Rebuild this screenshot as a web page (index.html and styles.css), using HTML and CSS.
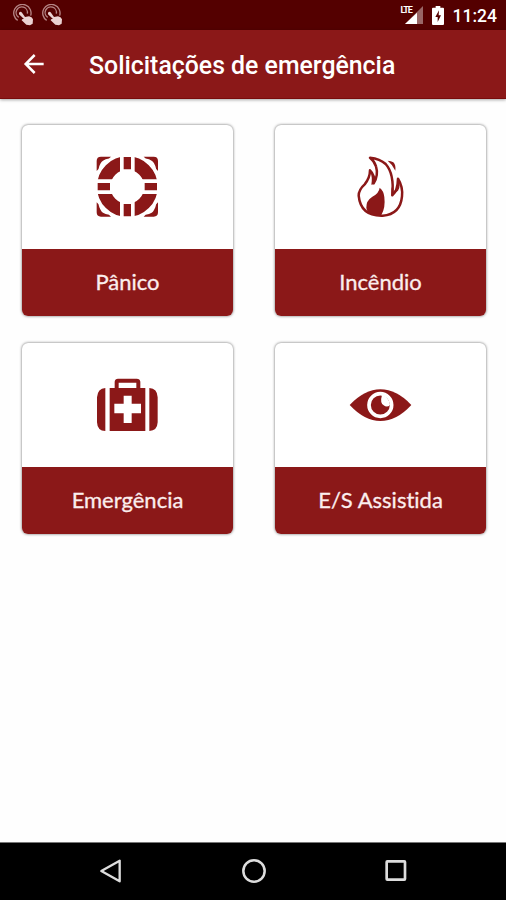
FILE: index.html
```
<!DOCTYPE html>
<html lang="pt-BR">
<head>
<meta charset="utf-8">
<title>Solicitações de emergência</title>
<link rel="stylesheet" href="styles.css">
</head>
<body>
<div class="screen">
  <div class="status">
    <div class="notices">
      <svg class="touch" viewBox="0 0 66 66"><g fill="none" stroke="#b58585" stroke-width="4"><path d="M17 49A26 26 0 1 1 56 35"/><path d="M20 40A17 17 0 1 1 46 29"/></g><path d="M21 26q5-5 9 0l9 13 12-2q9 1 12 9l-1 13-8 5-11-2-14-13q0-5 7-4L21 31z" fill="#ead2d2"/></svg>
      <svg class="touch" viewBox="0 0 66 66"><g fill="none" stroke="#b58585" stroke-width="4"><path d="M17 49A26 26 0 1 1 56 35"/><path d="M20 40A17 17 0 1 1 46 29"/></g><path d="M21 26q5-5 9 0l9 13 12-2q9 1 12 9l-1 13-8 5-11-2-14-13q0-5 7-4L21 31z" fill="#ead2d2"/></svg>
    </div>
    <div class="system">
      <div class="signal"><span class="lte">LTE</span><svg class="bars" viewBox="0 0 54 54"><path d="M54 0V54H0z" fill="#966"/><path d="M36 20V54H0z" fill="#fff"/></svg></div>
      <svg class="battery" viewBox="0 0 36 57"><path d="M11 0h14v5h8q3 0 3 3v46q0 3-3 3H3q-3 0-3-3V8q0-3 3-3h8z" fill="#fff"/><path d="M21 13L10 33h7v15l10-20h-7z" fill="#500"/></svg>
      <span class="clock">11:24</span>
    </div>
  </div>
  <header class="bar">
    <svg class="back" viewBox="0 0 66 66"><path d="M62 33H8M35 6L8 33l27 27" fill="none" stroke="#fff" stroke-width="7.5"/></svg>
    <h1 class="title">Solicitações de emergência</h1>
  </header>
  <main class="grid">
    <div class="card">
      <div class="art">
        <svg width="85" height="85" viewBox="0 0 255 255">
          <circle cx="127" cy="125" r="71" fill="none" stroke="#8b1818" stroke-width="40"/>
          <path d="M127 30V220M30 125H224" stroke="#fff" stroke-width="44"/>
          <path d="M127 36V73M127 177V214M38 125H75M179 125H216" stroke="#8b1818" stroke-width="22"/>
          <g fill="#8b1818"><path d="M35 78V48Q35 35 48 35H78Q74 42 62 43L54 47Q50 49 47 55L43 63Q42 74 35 78Z"/><path d="M219 78V48Q219 35 206 35H176Q180 42 192 43L200 47Q204 49 207 55L211 63Q212 74 219 78Z"/><path d="M35 172V202Q35 215 48 215H78Q74 208 62 207L54 203Q50 201 47 195L43 187Q42 176 35 172Z"/><path d="M219 172V202Q219 215 206 215H176Q180 208 192 207L200 203Q204 201 207 195L211 187Q212 176 219 172Z"/></g>
        </svg>
      </div>
      <div class="label">Pânico</div>
    </div>
    <div class="card">
      <div class="art">
        <svg width="85" height="85" viewBox="-6 0 255 255">
          <path d="M90 38Q120 41 137 57C155 77 161 108 157 151Q173 138 174 101Q189 125 186 154Q181 208 128 212Q62 214 56 152Q56 134 74 118Q90 99 90 76Q106 91 101 115Q116 91 108 64Q104 49 90 38Z" fill="none" stroke="#8b1818" stroke-width="7.5" stroke-linejoin="round"/>
          <path d="M91 79Q98 98 94 119L101 118Q110 93 91 79ZM154 125V153L174 137Q184 120 174 101Q173 130 159 142Z" fill="#8b1818"/>
          <path d="M119 128Q117 145 97 155Q78 167 79 188Q80 202 96 208Q108 213 124 210Q137 188 133 156Q131 137 119 128Z" fill="#8b1818"/>
          <path d="M143 47Q158 59 166 77Q168 59 160 52Q153 47 143 47Z" fill="#8b1818"/>
        </svg>
      </div>
      <div class="label">Incêndio</div>
    </div>
    <div class="card">
      <div class="art">
        <svg width="85" height="80" viewBox="0 0 255 240">
          <g fill="#8b1818"><path d="M61 69V198Q37 198 36 172V97Q38 70 61 69ZM193 69V198Q217 197 218 172V97Q217 70 193 69Z"/>
          <path fill-rule="evenodd" d="M74 69H89V50Q90 41 99 41H155Q165 41 166 50V69H181V198H74ZM101 53V69H154V53ZM116 92V116H88V145H116V174H140V145H168V116H140V92Z"/></g>
        </svg>
      </div>
      <div class="label">Emergência</div>
    </div>
    <div class="card">
      <div class="art">
        <svg width="85" height="60" viewBox="-6 0 255 180">
          <path d="M29 90Q74 43 121 43Q170 43 214 90Q170 138 121 138Q74 138 29 90Z" fill="#8b1818"/>
          <circle cx="121" cy="90" r="34" fill="none" stroke="#fff" stroke-width="11"/>
          <path d="M126 60Q119 84 131 91Q141 99 150 90Q147 65 126 60Z" fill="#fff"/>
        </svg>
      </div>
      <div class="label">E/S Assistida</div>
    </div>
  </main>
  <nav class="nav">
    <svg viewBox="0 0 72 78"><path d="M62 8V70L7 39Z" fill="none" stroke="#ddd" stroke-width="7" stroke-linejoin="round"/></svg>
    <svg viewBox="0 0 72 78"><circle cx="36" cy="39" r="32" fill="none" stroke="#ddd" stroke-width="7.5"/></svg>
    <svg viewBox="0 0 72 78"><rect x="8" y="10" width="55" height="55" rx="2" fill="none" stroke="#ddd" stroke-width="8"/></svg>
  </nav>
</div>
</body>
</html>
```
FILE: styles.css
```
* { box-sizing: border-box; }
body { margin: 0; background: #fff; }
svg { display: block; flex: none; }
.screen {
  width: 506px;
  height: 900px;
  display: flex;
  flex-direction: column;
  background: #fefefe;
  overflow: hidden;
}
.status {
  height: 30px;
  flex: none;
  display: flex;
  justify-content: space-between;
  background: #540000;
  color: #fff;
  padding: 4px 9px 0 12px;
}
.notices { display: flex; gap: 7px; }
.touch { width: 22px; height: 22px; }
.system { display: flex; align-items: flex-start; }
.signal { display: flex; width: 22px; height: 22px; position: relative; }
.bars { width: 18px; height: 18px; margin: 2px 0 0 5px; }
.lte {
  position: absolute;
  left: 1px;
  top: 2px;
  font: 700 9px/9px Roboto, sans-serif;
  letter-spacing: -1.2px;
  background: #540000;
}
.battery { width: 12px; height: 19px; margin: 2px 0 0 10px; }
.clock {
  margin-left: 9px;
  font: 500 17.5px/24px Roboto, sans-serif;
}
.bar {
  height: 69px;
  flex: none;
  display: flex;
  align-items: center;
  background: #8b1818;
  border-bottom: 1px solid #780c0c;
  box-shadow: 0 1px 3px rgba(0, 0, 0, .35);
  padding-left: 23px;
}
.back { width: 22px; height: 22px; }
.title {
  margin: 4px 0 0 44px;
  font: 500 24.85px/32px Roboto, sans-serif;
  color: #fff;
  white-space: nowrap;
}
.grid {
  flex: 1;
  display: grid;
  grid-template-columns: 211px 211px;
  grid-auto-rows: 191px;
  column-gap: 42px;
  row-gap: 27px;
  padding: 26px 0 0 22px;
}
.card {
  display: flex;
  flex-direction: column;
  border-radius: 6px;
  background: #fff;
  overflow: hidden;
  box-shadow: 0 0 3px rgba(0, 0, 0, .6);
}
.art {
  height: 124px;
  flex: none;
  display: flex;
  align-items: center;
  justify-content: center;
}
.label {
  flex: 1;
  background: #8b1818;
  color: #fbeeee;
  text-align: center;
  font: 400 22px/66px Lato, sans-serif;
  font-variant-ligatures: none;
  -webkit-text-stroke: .3px #fbeeee;
}
.nav {
  height: 58px;
  flex: none;
  display: flex;
  justify-content: space-between;
  background: #000;
  border-top: 1px solid #777;
  padding: 15px 98px 0 99px;
}
.nav svg { width: 24px; height: 26px; }
```
